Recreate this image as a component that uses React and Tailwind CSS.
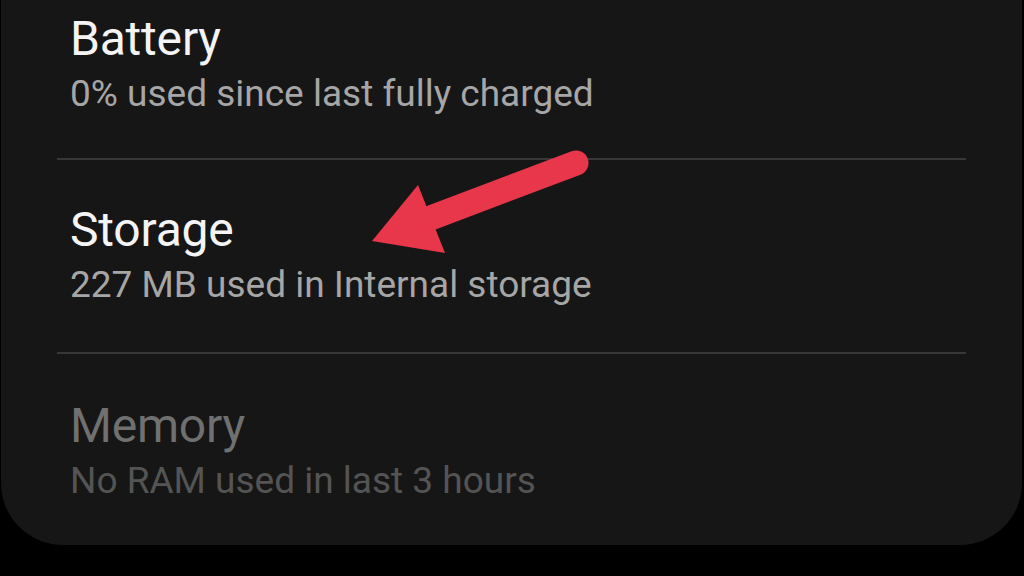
import React from "react";

function Row({ title, sub, titleCls, subCls }) {
  return (
    <div className="pl-[13px]">
      <div className={`text-[48px] leading-[58px] tracking-[-0.2px] ${titleCls}`}>{title}</div>
      <div className={`text-[37px] leading-[52px] ${subCls}`}>{sub}</div>
    </div>
  );
}

export default function App() {
  return (
    <div className="w-[1024px] h-[576px] bg-black overflow-hidden relative" style={{ fontFamily: "Roboto, 'Noto Sans', sans-serif" }}>
      <div className="ml-[1px] w-[1021px] h-[545px] bg-[#161616] rounded-b-[62px] px-[56px] flex flex-col">
        <div className="pt-[10px] pb-[38px]">
          <Row title="Battery" sub="0% used since last fully charged" titleCls="text-[#f4f4f4]" subCls="text-[#a6a6a6]" />
        </div>
        <div className="h-[2px] bg-[#383838]" />
        <div className="pt-[41px] pb-[41px]">
          <Row title="Storage" sub="227 MB used in Internal storage" titleCls="text-[#f4f4f4]" subCls="text-[#a6a6a6]" />
        </div>
        <div className="h-[2px] bg-[#383838]" />
        <div className="pt-[43px]">
          <Row title="Memory" sub="No RAM used in last 3 hours" titleCls="text-[#707070]" subCls="text-[#545454]" />
        </div>
      </div>
      <svg className="absolute left-0 top-0" width="1024" height="576" viewBox="0 0 1024 576">
        <line x1="576" y1="163" x2="420" y2="222" stroke="#e8364a" strokeWidth="25" strokeLinecap="round" />
        <polygon points="372,241 418,185 445,253" fill="#e8364a" />
      </svg>
    </div>
  );
}
